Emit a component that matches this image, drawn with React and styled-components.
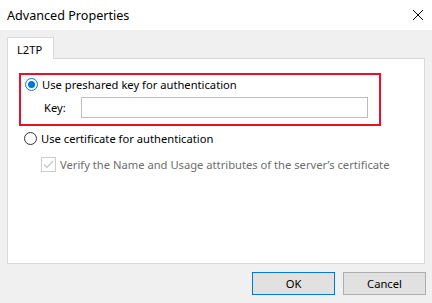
import React from "react";
import styled, { createGlobalStyle } from "styled-components";

const GlobalStyle = createGlobalStyle`
  *, *::before, *::after {
    box-sizing: border-box;
  }
  body {
    margin: 0;
    background: #f0f0f0;
    font-family: "Noto Sans", "Open Sans", sans-serif;
    color: #000;
  }
`;

const Window = styled.div`
  width: 432px;
  height: 303px;
  display: flex;
  flex-direction: column;
  background: #f0f0f0;
`;

const TitleBar = styled.div`
  height: 30px;
  background: #fff;
  display: flex;
  align-items: center;
  justify-content: space-between;
  padding: 0 8px 0 7px;
`;

const Title = styled.span`
  font-size: 12.6px;
  color: #000;
`;

const Body = styled.div`
  flex: 1;
  padding: 7px 7px 0 7px;
  display: flex;
  flex-direction: column;
`;

const TabStrip = styled.div`
  display: flex;
  height: 22px;
  margin-bottom: -1px;
  position: relative;
  z-index: 1;
`;

const Tab = styled.div`
  width: 47px;
  background: #fff;
  border: 1px solid #d9d9d9;
  border-bottom: none;
  font-size: 11.2px;
  padding: 4px 0 0 9px;
`;

const Panel = styled.div`
  height: 206px;
  background: #fff;
  border: 1px solid #d9d9d9;
  padding: 14px 0 0 11px;
  display: flex;
  flex-direction: column;
`;

const Highlight = styled.div`
  width: 362px;
  height: 53px;
  border: 2px solid #e81123;
  padding: 1px 0 0 4px;
  display: flex;
  flex-direction: column;
  gap: 4px;
`;

const OptionRow = styled.label`
  display: flex;
  align-items: center;
  gap: 4px;
  height: 17px;
  font-size: 11.2px;
  color: ${(p) => (p.disabled ? "#6d6d6d" : "#000")};
  margin-left: ${(p) => p.indent || 0}px;
`;

const Radio = styled.span`
  width: 13px;
  height: 13px;
  border-radius: 50%;
  border: 1px solid ${(p) => (p.checked ? "#0078d7" : "#333")};
  display: flex;
  align-items: center;
  justify-content: center;
  &::after {
    content: "";
    width: 7px;
    height: 7px;
    border-radius: 50%;
    background: ${(p) => (p.checked ? "#0078d7" : "transparent")};
  }
`;

const Check = styled.span`
  width: 15px;
  height: 15px;
  border: 1px solid #cccccc;
  display: flex;
  align-items: center;
  justify-content: center;
`;

const KeyRow = styled.div`
  display: flex;
  align-items: center;
  padding-left: 19px;
  gap: 15px;
`;

const KeyLabel = styled.span`
  font-size: 11.2px;
`;

const KeyInput = styled.div`
  width: 287px;
  height: 21px;
  border: 1px solid #bcbcbc;
  background: #fff;
`;

const CertBlock = styled.div`
  display: flex;
  flex-direction: column;
  gap: 9px;
  margin-top: 4px;
  padding-left: 5px;
`;

const Footer = styled.div`
  display: flex;
  justify-content: flex-end;
  gap: 8px;
  padding-top: 8px;
  margin-right: -1px;
`;

const Button = styled.button`
  width: 83px;
  height: 23px;
  font-family: inherit;
  font-size: 11.2px;
  background: #e1e1e1;
  border: 1px solid ${(p) => (p.primary ? "#0078d7" : "#adadad")};
  color: #000;
  padding: 0;
`;

export default function App() {
  return (
    <>
      <GlobalStyle />
      <Window>
        <TitleBar>
          <Title>Advanced Properties</Title>
          <svg width="12" height="12" viewBox="0 0 12 12">
            <path d="M1 1 L11 11 M11 1 L1 11" stroke="#000" strokeWidth="1" />
          </svg>
        </TitleBar>
        <Body>
          <TabStrip>
            <Tab>L2TP</Tab>
          </TabStrip>
          <Panel>
            <Highlight>
              <OptionRow>
                <Radio checked />
                Use preshared key for authentication
              </OptionRow>
              <KeyRow>
                <KeyLabel>Key:</KeyLabel>
                <KeyInput />
              </KeyRow>
            </Highlight>
            <CertBlock>
              <OptionRow>
                <Radio />
                Use certificate for authentication
              </OptionRow>
              <OptionRow disabled indent={17}>
                <Check>
                  <svg width="11" height="9" viewBox="0 0 11 9">
                    <path d="M1 4.5 L4 7.5 L10 1" fill="none" stroke="#c4c4c4" strokeWidth="1.2" />
                  </svg>
                </Check>
                Verify the Name and Usage attributes of the server’s certificate
              </OptionRow>
            </CertBlock>
          </Panel>
          <Footer>
            <Button primary>OK</Button>
            <Button>Cancel</Button>
          </Footer>
        </Body>
      </Window>
    </>
  );
}
